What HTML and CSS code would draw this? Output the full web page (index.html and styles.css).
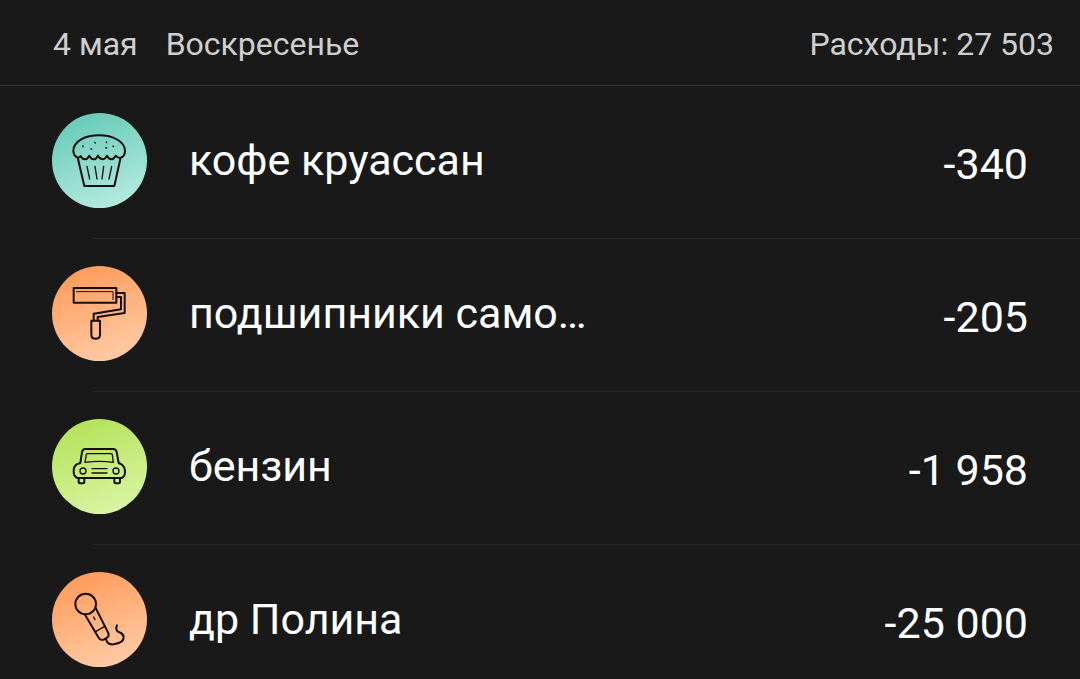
FILE: index.html
```html
<!DOCTYPE html>
<html lang="ru">
<head>
  <meta charset="utf-8">
  <meta name="viewport" content="width=device-width, initial-scale=1">
  <title>Расходы</title>
  <link rel="stylesheet" href="styles.css">
</head>
<body>
  <main class="day">
    <header class="day-header">
      <span class="date">4 мая</span>
      <span class="weekday">Воскресенье</span>
      <span class="total">Расходы: 27 503</span>
    </header>
    <ul class="entries">
      <li class="entry">
        <span class="badge badge-teal">
          <svg class="icon" viewBox="22 23 285 285" aria-hidden="true">
            <path stroke-width="6" d="M100 161 L119 242 H209 L227 161"/>
            <path stroke-width="6" d="M100 157 C90 153 86 146 86 136 C87 107 122 90 163 90 C205 90 240 108 241 136 C241 147 236 155 226 158 Q219 158 213 151 Q207 162 199 162 Q191 161 187 151 Q182 162 173 162 Q165 161 160 151 Q154 162 147 162 Q139 162 134 151 Q128 162 121 162 Q112 161 108 152 Q105 157 100 157"/>
            <path stroke-width="4" d="M127 183 L135 221 M151 183 L157 221 M177 183 L172 221 M201 183 L193 221"/>
            <path stroke-width="4" d="M115 121 V124 M150 111 L152 113 M139 130 L141 132 M186 110 L185 112 M183 127 L186 128 M205 122 L207 124"/>
          </svg>
        </span>
        <span class="name">кофе круассан</span>
        <span class="amount">-340</span>
      </li>
      <li class="entry">
        <span class="badge badge-orange">
          <svg class="icon" viewBox="22 23 285 285" aria-hidden="true">
            <path stroke-width="6" d="M87 89 H215 V133 H87 Z"/>
            <path stroke-width="3" d="M96 100 H205 V124"/>
            <path stroke-width="6" d="M215 104 H240 V164 L159 176 V187 M215 116 H229 V153 L147 166 V187"/>
            <path stroke-width="6" d="M140 187 H166 V229 Q166 241 153 241 Q140 241 140 229 Z"/>
          </svg>
        </span>
        <span class="name">подшипники само…</span>
        <span class="amount">-205</span>
      </li>
      <li class="entry">
        <span class="badge badge-green">
          <svg class="icon" viewBox="22 23 285 285" aria-hidden="true">
            <path stroke-width="6" d="M98 200 Q87 195 87 182 Q86 166 96 159 L107 155 L112 122 Q114 113 122 113 H206 Q214 113 216 122 L222 155 L232 160 Q241 167 241 182 Q241 195 231 200 Z"/>
            <path stroke-width="4" d="M121 153 L125 130 Q126 127 129 127 H199 Q202 127 203 130 L206 153 Q164 147 121 153 Z M142 172 H187 M142 185 H187"/>
            <circle cx="115" cy="179" r="9" stroke-width="4"/>
            <circle cx="214" cy="179" r="9" stroke-width="4"/>
            <path stroke-width="6" d="M102 200 V212 Q102 216 106 216 H115 Q119 216 119 212 V200 M209 200 V212 Q209 216 213 216 H222 Q226 216 226 212 V200"/>
          </svg>
        </span>
        <span class="name">бензин</span>
        <span class="amount">-1 958</span>
      </li>
      <li class="entry">
        <span class="badge badge-orange">
          <svg class="icon" viewBox="22 23 285 285" aria-hidden="true">
            <circle cx="123" cy="119" r="31" stroke-width="6"/>
            <path stroke-width="6" d="M121 151 L162 220 Q168 230 177 226 L187 220 Q195 215 190 204 L153 131"/>
            <path stroke-width="4" d="M147 158 L151 166 M154 201 L180 186"/>
            <path stroke-width="6" d="M184 224 Q188 242 206 240 Q239 235 237 218 Q235 207 224 204 Q210 198 217 183"/>
          </svg>
        </span>
        <span class="name">др Полина</span>
        <span class="amount">-25 000</span>
      </li>
    </ul>
  </main>
</body>
</html>
```

FILE: styles.css
```css
* {
  box-sizing: border-box;
}

body {
  margin: 0;
  background: #191919;
  color: #fff;
  font-family: Roboto, "Noto Sans", sans-serif;
}

.day-header {
  display: flex;
  align-items: center;
  gap: 28px;
  padding: 24px 26px 21px 53px;
  color: #cfcfcf;
  font-size: 32px;
  line-height: 40px;
}

.total {
  margin-left: auto;
}

.entries {
  margin: 0;
  padding: 0;
  list-style: none;
}

.entry {
  display: flex;
  align-items: center;
  padding: 28px 52px 30px;
  background: linear-gradient(#262626, #262626) top right / calc(100% - 92px) 1px no-repeat;
}

.entry:first-child {
  background: linear-gradient(#333, #333) top right / 100% 1px no-repeat;
}

.entry:last-child {
  padding-bottom: 12px;
}

.badge {
  flex: none;
  width: 95px;
  height: 95px;
  margin-right: 42px;
  border-radius: 50%;
}

.badge-teal {
  background: linear-gradient(160deg, #68cbb9 10%, #b4ebdf 90%);
}

.badge-orange {
  background: linear-gradient(160deg, #ff9c5c 10%, #ffcba6 90%);
}

.badge-green {
  background: linear-gradient(160deg, #b4e359 10%, #daf4a4 90%);
}

.icon {
  display: block;
  width: 100%;
  height: 100%;
  fill: none;
  stroke: #160f0a;
  stroke-linecap: round;
  stroke-linejoin: round;
}

.name {
  flex: 1;
  min-width: 0;
  padding-bottom: 2px;
  overflow: hidden;
  font-size: 43px;
  line-height: 56px;
  text-overflow: ellipsis;
  white-space: nowrap;
}

.amount {
  padding-top: 6px;
  font-size: 43px;
  line-height: 56px;
  white-space: nowrap;
}
```
